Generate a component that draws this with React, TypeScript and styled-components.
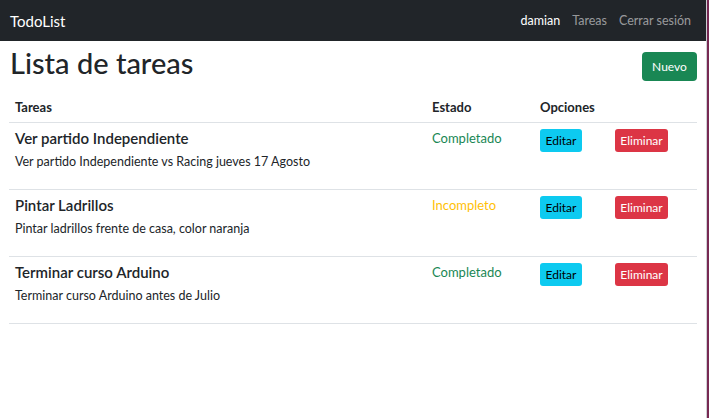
import React from "react";
import styled, { createGlobalStyle } from "styled-components";

const Global = createGlobalStyle`
  html, body { margin: 0; padding: 0; }
  body {
    background: #772953;
    font-family: Lato, "Noto Sans", sans-serif;
    color: #212529;
  }
  * { box-sizing: border-box; }
`;

const Page = styled.div`
  width: 707px;
  height: 418px;
  background: #fff;
  border-right: 1px solid #cfcfd4;
`;

const Navbar = styled.nav`
  height: 41px;
  background: #212529;
  display: flex;
  align-items: center;
  justify-content: space-between;
  padding: 0 9px 0 10px;
`;

const Brand = styled.span`
  color: #fff;
  font-size: 15px;
  line-height: 18px;
`;

const NavList = styled.div`
  display: flex;
`;

const NavLink = styled.span<{ $active?: boolean }>`
  font-size: 12.5px;
  line-height: 18px;
  padding: 0 6px;
  color: ${(p) => (p.$active ? "#fff" : "rgba(255,255,255,0.55)")};
`;

const Container = styled.main`
  padding: 4px 9px 0 9px;
`;

const TitleRow = styled.div`
  display: flex;
  justify-content: space-between;
  align-items: flex-end;
  margin-bottom: 11px;
`;

const Title = styled.h1`
  margin: 0;
  font-size: 29px;
  line-height: 36px;
  font-weight: 500;
  padding-left: 1px;
`;

const Button = styled.button<{ $variant: "success" | "info" | "danger"; $h: number; $w: number }>`
  border: none;
  font-family: inherit;
  font-size: 12px;
  height: ${(p) => p.$h}px;
  width: ${(p) => p.$w}px;
  padding: 0;
  border-radius: ${(p) => (p.$variant === "success" ? 4 : 3)}px;
  background: ${(p) =>
    p.$variant === "success" ? "#198754" : p.$variant === "info" ? "#0dcaf0" : "#dc3545"};
  color: ${(p) => (p.$variant === "info" ? "#000" : "#fff")};
`;

const Grid = styled.div`
  display: grid;
  grid-template-columns: 417px 108px 75px 1fr;
`;

const Row = styled.div`
  display: contents;
`;

const Cell = styled.div<{ $head?: boolean }>`
  padding: 6px;
  border-bottom: 1px solid #dee2e6;
  font-size: ${(p) => (p.$head ? 13 : 12)}px;
  line-height: 18px;
  font-weight: ${(p) => (p.$head ? 700 : 400)};
  display: flex;
  flex-direction: column;
  align-items: flex-start;
`;

const TaskTitle = styled.h5`
  margin: 0 0 6px 0;
  font-size: 15px;
  line-height: 18px;
  font-weight: 600;
`;

const TaskDesc = styled.p`
  margin: 0 0 12px 0;
  font-size: 12.5px;
  line-height: 18px;
`;

const Status = styled.span<{ $done: boolean }>`
  font-size: 13px;
  color: ${(p) => (p.$done ? "#198754" : "#ffc107")};
`;

const tasks = [
  { title: "Ver partido Independiente", desc: "Ver partido Independiente vs Racing jueves 17 Agosto", done: true },
  { title: "Pintar Ladrillos", desc: "Pintar ladrillos frente de casa, color naranja", done: false },
  { title: "Terminar curso Arduino", desc: "Terminar curso Arduino antes de Julio", done: true },
];

export default function App() {
  return (
    <>
      <Global />
      <Page>
        <Navbar>
          <Brand>TodoList</Brand>
          <NavList>
            <NavLink $active>damian</NavLink>
            <NavLink>Tareas</NavLink>
            <NavLink>Cerrar sesión</NavLink>
          </NavList>
        </Navbar>
        <Container>
          <TitleRow>
            <Title>Lista de tareas</Title>
            <Button $variant="success" $h={29} $w={55}>Nuevo</Button>
          </TitleRow>
          <Grid>
            <Row>
              <Cell $head>Tareas</Cell>
              <Cell $head>Estado</Cell>
              <Cell $head>Opciones</Cell>
              <Cell $head></Cell>
            </Row>
            {tasks.map((t) => (
              <Row key={t.title}>
                <Cell>
                  <TaskTitle>{t.title}</TaskTitle>
                  <TaskDesc>{t.desc}</TaskDesc>
                </Cell>
                <Cell>
                  <Status $done={t.done}>{t.done ? "Completado" : "Incompleto"}</Status>
                </Cell>
                <Cell>
                  <Button $variant="info" $h={23} $w={42}>Editar</Button>
                </Cell>
                <Cell>
                  <Button $variant="danger" $h={23} $w={53}>Eliminar</Button>
                </Cell>
              </Row>
            ))}
          </Grid>
        </Container>
      </Page>
    </>
  );
}
